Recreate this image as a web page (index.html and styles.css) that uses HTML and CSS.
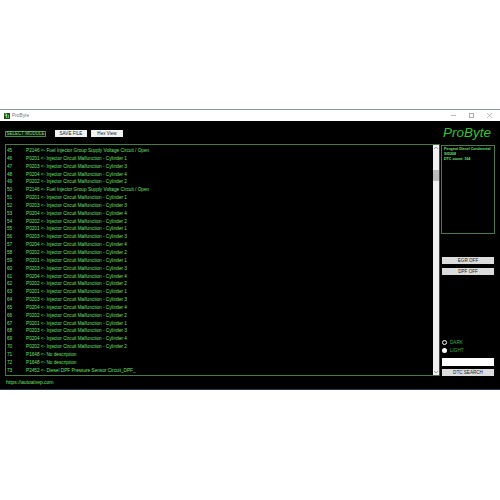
FILE: index.html
```html
<!DOCTYPE html>
<html lang="en">
<head>
  <meta charset="UTF-8" />
  <title>ProByte</title>
  <link rel="stylesheet" href="styles.css">
</head>
<body>
  <div class="window">
    <div class="titlebar">
      <svg class="app-icon" viewBox="0 0 7 7"><rect width="7" height="7" fill="#1c4a1c"/><path d="M1 1h2v5M3 1v2H1M5 2v4" stroke="#8fe88f" fill="none"/></svg>
      <span class="title">ProByte</span>
      <div class="win-btns">
        <span class="win-min"></span>
        <span class="win-max"></span>
        <svg class="win-close" viewBox="0 0 5 5"><path d="M0 0L5 5M5 0L0 5" stroke="#999" stroke-width="0.6"/></svg>
      </div>
    </div>
    <div class="toolbar">
      <button class="select-btn">SELECT MODULE</button>
      <button class="tool-btn save-btn">SAVE FILE</button>
      <button class="tool-btn hex-btn">Hex View</button>
      <div class="logo">ProByte</div>
    </div>
    <div class="main">
      <div class="list">
        <div class="rows">
          <div class="row"><span class="num">45</span>P2146 &lt;- Fuel Injector Group Supply Voltage Circuit / Open</div>
          <div class="row"><span class="num">46</span>P0201 &lt;- Injector Circuit Malfunction - Cylinder 1</div>
          <div class="row"><span class="num">47</span>P0203 &lt;- Injector Circuit Malfunction - Cylinder 3</div>
          <div class="row"><span class="num">48</span>P0204 &lt;- Injector Circuit Malfunction - Cylinder 4</div>
          <div class="row"><span class="num">49</span>P0202 &lt;- Injector Circuit Malfunction - Cylinder 2</div>
          <div class="row"><span class="num">50</span>P2146 &lt;- Fuel Injector Group Supply Voltage Circuit / Open</div>
          <div class="row"><span class="num">51</span>P0201 &lt;- Injector Circuit Malfunction - Cylinder 1</div>
          <div class="row"><span class="num">52</span>P0203 &lt;- Injector Circuit Malfunction - Cylinder 3</div>
          <div class="row"><span class="num">53</span>P0204 &lt;- Injector Circuit Malfunction - Cylinder 4</div>
          <div class="row"><span class="num">54</span>P0202 &lt;- Injector Circuit Malfunction - Cylinder 2</div>
          <div class="row"><span class="num">55</span>P0201 &lt;- Injector Circuit Malfunction - Cylinder 1</div>
          <div class="row"><span class="num">56</span>P0203 &lt;- Injector Circuit Malfunction - Cylinder 3</div>
          <div class="row"><span class="num">57</span>P0204 &lt;- Injector Circuit Malfunction - Cylinder 4</div>
          <div class="row"><span class="num">58</span>P0202 &lt;- Injector Circuit Malfunction - Cylinder 2</div>
          <div class="row"><span class="num">59</span>P0201 &lt;- Injector Circuit Malfunction - Cylinder 1</div>
          <div class="row"><span class="num">60</span>P0203 &lt;- Injector Circuit Malfunction - Cylinder 3</div>
          <div class="row"><span class="num">61</span>P0204 &lt;- Injector Circuit Malfunction - Cylinder 4</div>
          <div class="row"><span class="num">62</span>P0202 &lt;- Injector Circuit Malfunction - Cylinder 2</div>
          <div class="row"><span class="num">63</span>P0201 &lt;- Injector Circuit Malfunction - Cylinder 1</div>
          <div class="row"><span class="num">64</span>P0203 &lt;- Injector Circuit Malfunction - Cylinder 3</div>
          <div class="row"><span class="num">65</span>P0204 &lt;- Injector Circuit Malfunction - Cylinder 4</div>
          <div class="row"><span class="num">66</span>P0202 &lt;- Injector Circuit Malfunction - Cylinder 2</div>
          <div class="row"><span class="num">67</span>P0201 &lt;- Injector Circuit Malfunction - Cylinder 1</div>
          <div class="row"><span class="num">68</span>P0203 &lt;- Injector Circuit Malfunction - Cylinder 3</div>
          <div class="row"><span class="num">69</span>P0204 &lt;- Injector Circuit Malfunction - Cylinder 4</div>
          <div class="row"><span class="num">70</span>P0202 &lt;- Injector Circuit Malfunction - Cylinder 2</div>
          <div class="row"><span class="num">71</span>P1648 &lt;- No description</div>
          <div class="row"><span class="num">72</span>P1648 &lt;- No description</div>
          <div class="row"><span class="num">73</span>P2452 &lt;- Diesel DPF Pressure Sensor Circuit_DPF_</div>
        </div>
        <div class="scrollbar">
          <svg class="arrow" viewBox="0 0 6 4"><path d="M1 3L3 1L5 3" stroke="#777" fill="none" stroke-width="0.7"/></svg>
          <div class="track"><div class="thumb"></div></div>
          <svg class="arrow" viewBox="0 0 6 4"><path d="M1 1L3 3L5 1" stroke="#777" fill="none" stroke-width="0.7"/></svg>
        </div>
      </div>
      <div class="side">
        <div class="info">
          <div>Peugeot Diesel Continental</div>
          <div>SID208</div>
          <div>DTC count: 164</div>
        </div>
        <button class="side-btn egr-btn">EGR OFF</button>
        <button class="side-btn dpf-btn">DPF OFF</button>
        <div class="radio-row dark-row"><span class="radio radio-on"></span>DARK</div>
        <div class="radio-row"><span class="radio"></span>LIGHT</div>
        <div class="search-box"></div>
        <button class="side-btn search-btn">DTC SEARCH</button>
      </div>
    </div>
    <div class="footer">https://autoalxep.com</div>
  </div>
</body>
</html>
```

FILE: styles.css
```css
* {
  box-sizing: border-box;
}
body {
  margin: 0;
  background: #fff;
  font-family: "Liberation Sans", Arial, sans-serif;
}
button {
  font-family: "Liberation Sans", Arial, sans-serif;
  padding: 0;
  border-radius: 0;
  color: #222;
  flex-shrink: 0;
  white-space: nowrap;
}
.window {
  margin-top: 109px;
  height: 281px;
  background: #000;
  border-top: 1px solid #8a9a94;
  border-bottom: 1px solid #1f3a4a;
}
.titlebar {
  display: flex;
  align-items: center;
  height: 11px;
  background: #fff;
  padding-left: 4px;
}
.app-icon {
  width: 6px;
  height: 6px;
}
.title {
  margin-left: 2px;
  font-size: 4.8px;
  color: #777;
}
.win-btns {
  margin-left: auto;
  display: flex;
  align-items: center;
  gap: 13px;
  padding-right: 8px;
}
.win-min {
  width: 5px;
  height: 1px;
  background: #bbb;
}
.win-max {
  width: 5px;
  height: 5px;
  border: 1px solid #aaa;
}
.win-close {
  width: 5px;
  height: 5px;
}
.toolbar {
  display: flex;
  align-items: center;
  height: 23px;
  padding: 2px 9px 0 5px;
}
.select-btn {
  width: 41px;
  height: 6px;
  font-size: 4.5px;
  line-height: 4px;
  background: #0a1a0a;
  color: #7ed67e;
  border: 1px solid #4a8a4a;
}
.tool-btn {
  height: 7px;
  font-size: 4.6px;
  line-height: 7px;
  background: #f2f2f2;
  border: none;
}
.save-btn {
  width: 32px;
  margin-left: 9px;
}
.hex-btn {
  width: 32px;
  margin-left: 4px;
}
.logo {
  margin-left: auto;
  margin-top: -2px;
  font-size: 13.5px;
  font-style: italic;
  color: #35c235;
}
.main {
  display: flex;
  align-items: flex-start;
  padding-left: 5px;
}
.list {
  display: flex;
  width: 434px;
  height: 232px;
  border: 1px solid #4a7a4a;
  border-right: none;
}
.rows {
  flex: 1;
  padding: 2px 0 0 1px;
}
.row {
  height: 7.857px;
  line-height: 7.857px;
  font-size: 4.7px;
  white-space: nowrap;
  color: #6fe06f;
}
.num {
  display: inline-block;
  width: 19px;
}
.scrollbar {
  width: 6px;
  display: flex;
  flex-direction: column;
  background: #f0f0f0;
}
.arrow {
  width: 6px;
  height: 6px;
}
.track {
  flex: 1;
  padding-top: 19px;
}
.thumb {
  height: 11px;
  background: #bdbdbd;
}
.side {
  width: 56px;
  padding-left: 1px;
  height: 232px;
  border-left: 1px solid #2e5a2e;
  display: flex;
  flex-direction: column;
}
.info {
  flex-shrink: 0;
  width: 54px;
  height: 89px;
  margin-top: 1px;
  padding: 1px 2px;
  border: 1px solid #4a7a4a;
  font-size: 3.6px;
  line-height: 5.2px;
  font-weight: bold;
  white-space: nowrap;
  color: #6fe06f;
}
.side-btn {
  width: 52px;
  height: 7px;
  margin-left: 1px;
  font-size: 4.6px;
  line-height: 7px;
  background: #dcdcdc;
  border: none;
}
.egr-btn {
  margin-top: 23px;
}
.dpf-btn {
  margin-top: 4px;
}
.radio-row {
  display: flex;
  align-items: center;
  flex-shrink: 0;
  height: 8px;
  font-size: 4.6px;
  color: #4caf4c;
}
.dark-row {
  margin-top: 63px;
}
.radio {
  width: 5px;
  height: 5px;
  margin: 0 3px 0 1px;
  border-radius: 50%;
  background: #fff;
}
.radio-on {
  background: #000;
  border: 1px solid #fff;
}
.search-box {
  flex-shrink: 0;
  width: 52px;
  height: 8px;
  margin: 4px 0 0 1px;
  background: #fff;
}
.search-btn {
  margin-top: 3px;
}
.footer {
  padding: 3px 0 0 6px;
  font-size: 5px;
  color: #6fe06f;
}
```
